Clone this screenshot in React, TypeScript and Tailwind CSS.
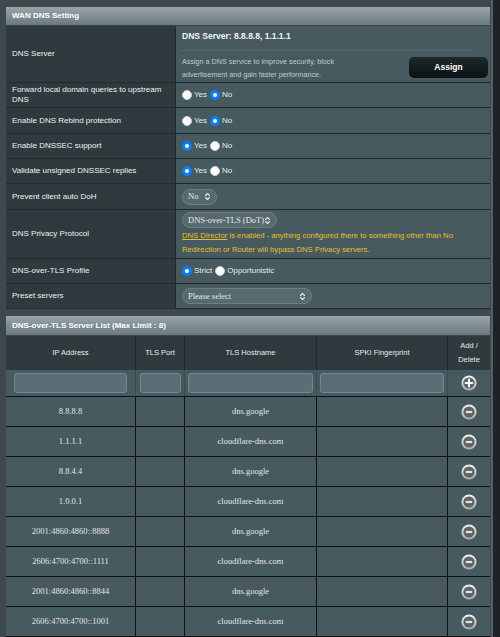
import React from "react";

const sans = { fontFamily: '"Liberation Sans", Arial, sans-serif' };

function Radio({ on }: { on: boolean }) {
  return on ? (
    <span className="inline-flex h-[10px] w-[10px] items-center justify-center rounded-full bg-[#0a7cf5]">
      <span className="h-[4px] w-[4px] rounded-full bg-white" />
    </span>
  ) : (
    <span className="inline-block h-[10px] w-[10px] rounded-full border border-[#cfcfcf] bg-white" />
  );
}

function RadioPair({ a, b, sel }: { a: string; b: string; sel: 0 | 1 }) {
  return (
    <div className="flex items-center text-[8px] text-[#e8ecec]">
      <Radio on={sel === 0} />
      <span className="ml-[2px] mr-[3px]">{a}</span>
      <Radio on={sel === 1} />
      <span className="ml-[2px]">{b}</span>
    </div>
  );
}

function Chev() {
  return (
    <svg width="7" height="9" viewBox="0 0 7 9" className="shrink-0">
      <path d="M1.5 3.5 L3.5 1.5 L5.5 3.5 M1.5 5.5 L3.5 7.5 L5.5 5.5" fill="none" stroke="#e6e6e6" strokeWidth="1.1" strokeLinecap="round" strokeLinejoin="round" />
    </svg>
  );
}

function Select({ label, w }: { label: string; w: string }) {
  return (
    <div
      className={`flex h-[16px] items-center justify-between whitespace-nowrap rounded-full border border-[#6d7e83] bg-[#566a70] pl-[5px] pr-[5px] text-[8.5px] text-[#e8e8e8] ${w}`}
      style={{ fontFamily: '"Liberation Serif", "Times New Roman", serif' }}
    >
      <span>{label}</span>
      <Chev />
    </div>
  );
}

function CircleIcon({ plus }: { plus?: boolean }) {
  const id = plus ? "gp" : "gm";
  return (
    <svg width="16" height="16" viewBox="0 0 16 16">
      <defs>
        <linearGradient id={id} x1="0" y1="0" x2="0" y2="1">
          <stop offset="0" stopColor="#f4f4f4" />
          <stop offset="1" stopColor="#a9a9a9" />
        </linearGradient>
      </defs>
      <circle cx="8" cy="8" r="7.6" fill={`url(#${id})`} />
      <circle cx="8" cy="8" r="5.6" fill="#5f6466" />
      {plus ? (
        <path d="M8 4.6 V11.4 M4.6 8 H11.4" stroke="#ffffff" strokeWidth="2" strokeLinecap="round" />
      ) : (
        <rect x="4.3" y="6.8" width="7.4" height="2.4" rx="1.2" fill="#ffffff" stroke="#3a3a3a" strokeWidth="0.5" />
      )}
    </svg>
  );
}

function Row({ label, h, children }: { label: React.ReactNode; h: string; children: React.ReactNode }) {
  return (
    <div className={`flex border-b border-[#222a2d] ${h}`}>
      <div className="flex w-[170px] shrink-0 items-center border-r border-[#222a2d] bg-[#2f3a3e] pl-[6px] pr-[4px] text-[8px] leading-[10px] text-[#eef1f2]">
        {label}
      </div>
      <div className="flex flex-1 items-center bg-[#475a5f] pl-[6px]">{children}</div>
    </div>
  );
}

const servers: [string, string][] = [
  ["8.8.8.8", "dns.google"],
  ["1.1.1.1", "cloudflare-dns.com"],
  ["8.8.4.4", "dns.google"],
  ["1.0.0.1", "cloudflare-dns.com"],
  ["2001:4860:4860::8888", "dns.google"],
  ["2606:4700:4700::1111", "cloudflare-dns.com"],
  ["2001:4860:4860::8844", "dns.google"],
  ["2606:4700:4700::1001", "cloudflare-dns.com"],
];

export default function App() {
  return (
    <div className="flex h-[637px] w-[500px] overflow-hidden bg-[#3f494d]" style={sans}>
      <div className="ml-[6px] mt-[7px] flex w-[484px] flex-col">
        {/* WAN DNS Setting */}
        <div className="flex h-[19px] items-center border-b border-[#3b4649] bg-gradient-to-b from-[#98a6ab] to-[#6a797e] pl-[6px] text-[8px] font-bold text-white">
          WAN DNS Setting
        </div>
        <Row label="DNS Server" h="h-[57px]">
          <div className="flex h-full w-full flex-col pr-[2px] pt-[4px]">
            <div className="text-[8.5px] font-bold text-[#f2f4f4]">DNS Server: 8.8.8.8, 1.1.1.1</div>
            <div className="mr-[16px] mt-[7px] h-px bg-[#5a6c71]" />
            <div className="mt-[4px] flex items-center justify-between">
              <div className="text-[7.2px] leading-[13px] text-[#c3ccce]">
                Assign a DNS service to improve security, block
                <br />
                advertisement and gain faster performance.
              </div>
              <div className="flex h-[21px] w-[79px] items-center justify-center rounded-[5px] bg-gradient-to-b from-[#1f282b] to-[#0c1112] text-[8.5px] font-bold text-white">
                Assign
              </div>
            </div>
          </div>
        </Row>
        <Row label={<span>Forward local domain queries to upstream<br />DNS</span>} h="h-[25px]">
          <RadioPair a="Yes" b="No" sel={1} />
        </Row>
        <Row label="Enable DNS Rebind protection" h="h-[26px]">
          <RadioPair a="Yes" b="No" sel={1} />
        </Row>
        <Row label="Enable DNSSEC support" h="h-[25px]">
          <RadioPair a="Yes" b="No" sel={0} />
        </Row>
        <Row label="Validate unsigned DNSSEC replies" h="h-[25px]">
          <RadioPair a="Yes" b="No" sel={0} />
        </Row>
        <Row label="Prevent client auto DoH" h="h-[26px]">
          <Select label="No" w="w-[35px]" />
        </Row>
        <Row label="DNS Privacy Protocol" h="h-[49px]">
          <div className="flex flex-col">
            <Select label="DNS-over-TLS (DoT)" w="w-[95px]" />
            <div className="mt-[1px] whitespace-nowrap text-[7.7px] leading-[13.5px] text-[#e2c22c]">
              <span className="underline">DNS Director</span> is enabled - anything configured there to something other than No
              <br />
              Redirection or Router will bypass DNS Privacy servers.
            </div>
          </div>
        </Row>
        <Row label="DNS-over-TLS Profile" h="h-[25px]">
          <RadioPair a="Strict" b="Opportunistic" sel={0} />
        </Row>
        <Row label="Preset servers" h="h-[25px]">
          <Select label="Please select" w="w-[130px]" />
        </Row>

        {/* Server list */}
        <div className="mt-[7px] flex h-[20px] items-center border-b border-[#3b4649] bg-gradient-to-b from-[#98a6ab] to-[#6a797e] pl-[6px] text-[8px] font-bold text-white">
          DNS-over-TLS Server List (Max Limit : 8)
        </div>
        <div className="grid h-[34px] grid-cols-[130px_49px_132px_131px_42px] bg-[#2f3a3e] text-[7.5px] text-[#e6eaeb]">
          <div className="flex items-center justify-center border-r border-[#222a2d]">IP Address</div>
          <div className="flex items-center justify-center border-r border-[#222a2d]">TLS Port</div>
          <div className="flex items-center justify-center border-r border-[#222a2d]">TLS Hostname</div>
          <div className="flex items-center justify-center border-r border-[#222a2d]">SPKI Fingerprint</div>
          <div className="flex flex-col items-center justify-center text-center leading-[14px]">
            <span>Add /</span>
            <span>Delete</span>
          </div>
        </div>
        <div className="grid h-[26px] grid-cols-[130px_49px_132px_131px_42px] bg-[#475a5f]">
          <div className="flex items-center justify-center border-r border-[#3a4a4f]">
            <div className="h-[20px] w-[113px] rounded-[3px] border border-[#73878c] bg-[#5a6f75]" />
          </div>
          <div className="flex items-center justify-center border-r border-[#3a4a4f]">
            <div className="h-[20px] w-[41px] rounded-[3px] border border-[#73878c] bg-[#5a6f75]" />
          </div>
          <div className="flex items-center justify-center border-r border-[#3a4a4f]">
            <div className="h-[20px] w-[125px] rounded-[3px] border border-[#73878c] bg-[#5a6f75]" />
          </div>
          <div className="flex items-center justify-center border-r border-[#3a4a4f]">
            <div className="h-[20px] w-[124px] rounded-[3px] border border-[#73878c] bg-[#5a6f75]" />
          </div>
          <div className="flex items-center justify-center">
            <CircleIcon plus />
          </div>
        </div>
        <div
          className="border-t border-[#111] text-[8.5px] text-[#e4e6e6]"
          style={{ fontFamily: '"Liberation Serif", "Times New Roman", serif' }}
        >
          {servers.map(([ip, host]) => (
            <div
              key={ip}
              className="grid h-[30px] grid-cols-[130px_49px_132px_131px_42px] border-b border-[#111] bg-[#475a5f]"
            >
              <div className="flex items-center justify-center border-r border-[#111]">{ip}</div>
              <div className="border-r border-[#111]" />
              <div className="flex items-center justify-center border-r border-[#111]">{host}</div>
              <div className="border-r border-[#111]" />
              <div className="flex items-center justify-center">
                <CircleIcon />
              </div>
            </div>
          ))}
        </div>
      </div>
      <div className="ml-[1px] w-[2px] bg-[#566064]" />
      <div className="flex-1 bg-[#1e2325]" />
    </div>
  );
}
